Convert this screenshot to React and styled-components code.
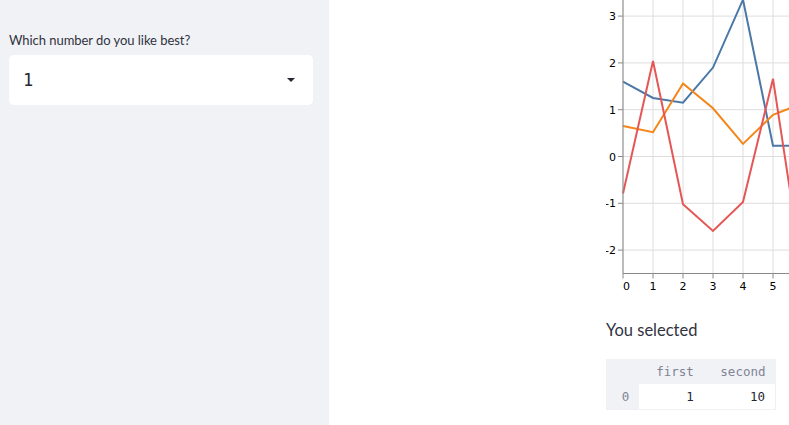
import styled, { createGlobalStyle } from "styled-components";

const GlobalStyle = createGlobalStyle`
  html, body {
    margin: 0;
    padding: 0;
    overflow: hidden;
    background: #ffffff;
  }
`;

const Page = styled.div`
  display: flex;
  width: 789px;
  height: 425px;
  font-family: Lato, "Noto Sans", sans-serif;
  color: #31333f;
`;

const Sidebar = styled.aside`
  width: 329px;
  flex-shrink: 0;
  background: #f0f2f6;
  padding: 32px 16px 0 9px;
  box-sizing: border-box;
`;

const Label = styled.label`
  display: block;
  font-size: 13px;
  letter-spacing: -0.05px;
  line-height: 16px;
  color: #31333f;
  margin-bottom: 7px;
`;

const Select = styled.div`
  display: flex;
  align-items: center;
  justify-content: space-between;
  height: 50px;
  width: 304px;
  box-sizing: border-box;
  padding: 0 18px 0 14px;
  background: #ffffff;
  border-radius: 5px;
`;

const SelectValue = styled.span`
  font-family: "DejaVu Sans Mono", monospace;
  font-size: 17px;
  color: #262730;
`;

const Caret = styled.span`
  width: 0;
  height: 0;
  border-left: 4px solid transparent;
  border-right: 4px solid transparent;
  border-top: 4px solid #262730;
`;

const Main = styled.main`
  flex: 1;
  overflow: hidden;
  padding-left: 277px;
`;

const Content = styled.div`
  width: 183px;
  display: flex;
  flex-direction: column;
`;

const Heading = styled.h3`
  margin: 25px 0 19px;
  font-size: 16.5px;
  font-weight: 400;
  line-height: 20px;
  color: #31333f;
`;

const Table = styled.table`
  border-collapse: collapse;
  font-family: "DejaVu Sans Mono", monospace;
  font-size: 12.5px;
  width: 170px;
`;

const HeadCell = styled.th`
  height: 25px;
  padding: 0 10px 0 0;
  text-align: right;
  font-weight: 400;
  color: #808495;
  background: #f0f2f6;
  width: ${(p) => p.w}px;
`;

const Cell = styled.td`
  height: 25px;
  padding: 0 10px 0 0;
  text-align: right;
  color: ${(p) => (p.index ? "#808495" : "#262730")};
  background: ${(p) => (p.index ? "#f0f2f6" : "#ffffff")};
  border-bottom: 1px solid #eef0f4;
  border-right: ${(p) => (p.last ? "1px solid #eef0f4" : "none")};
`;

const ChartSvg = styled.svg`
  display: block;
  font-family: "DejaVu Sans", sans-serif;
`;

const X0 = 17;
const DX = 30;
const Y0 = 156.5;
const DY = 46.8;
const px = (i) => X0 + DX * i;
const py = (v) => Y0 - DY * v;

const series = [
  { color: "#4c78a8", data: [1.6, 1.25, 1.15, 1.9, 3.35, 0.23, 0.23] },
  { color: "#f58518", data: [0.65, 0.52, 1.56, 1.03, 0.27, 0.89, 1.14] },
  { color: "#e45756", data: [-0.79, 2.04, -1.02, -1.59, -0.97, 1.66, -2.55] },
];

const yTicks = [-2, -1, 0, 1, 2, 3];
const xGrid = [0, 1, 2, 3, 4, 5, 6];
const xLabels = [0, 1, 2, 3, 4, 5];
const bottom = py(-2.5);

const Chart = () => (
  <ChartSvg width="183" height="295" viewBox="0 0 183 295">
    {xGrid.map((i) => (
      <line key={"gx" + i} x1={px(i)} x2={px(i)} y1={-10} y2={bottom} stroke="#ddd" />
    ))}
    {yTicks.map((v) => (
      <line key={"gy" + v} x1={X0} x2={X0 + DX * 7} y1={py(v)} y2={py(v)} stroke="#ddd" />
    ))}
    {series.map((s) => (
      <polyline
        key={s.color}
        fill="none"
        stroke={s.color}
        strokeWidth="2"
        points={s.data.map((v, i) => `${px(i)},${py(v)}`).join(" ")}
      />
    ))}
    <line x1={X0} x2={X0} y1={-10} y2={bottom} stroke="#888" />
    <line x1={X0} x2={X0 + DX * 7} y1={bottom} y2={bottom} stroke="#888" />
    {yTicks.map((v) => (
      <g key={"ty" + v}>
        <line x1={X0 - 5} x2={X0} y1={py(v)} y2={py(v)} stroke="#888" />
        <text x={X0 - 7} y={py(v) + 4} fontSize="11" textAnchor="end" fill="#000">
          {v}
        </text>
      </g>
    ))}
    {xGrid.map((i) => (
      <line key={"tk" + i} x1={px(i)} x2={px(i)} y1={bottom} y2={bottom + 5} stroke="#888" />
    ))}
    {xLabels.map((i) => (
      <text
        key={"tx" + i}
        x={px(i)}
        y={bottom + 16}
        fontSize="11"
        textAnchor={i === 0 ? "start" : "middle"}
        fill="#000"
      >
        {i}
      </text>
    ))}
  </ChartSvg>
);

const App = () => {
  return (
    <Page>
      <GlobalStyle />
      <Sidebar>
        <Label>Which number do you like best?</Label>
        <Select>
          <SelectValue>1</SelectValue>
          <Caret />
        </Select>
      </Sidebar>
      <Main>
        <Content>
          <Chart />
          <Heading>You selected</Heading>
          <Table>
            <thead>
              <tr>
                <HeadCell w={33}></HeadCell>
                <HeadCell w={65}>first</HeadCell>
                <HeadCell w={72}>second</HeadCell>
              </tr>
            </thead>
            <tbody>
              <tr>
                <Cell index>0</Cell>
                <Cell>1</Cell>
                <Cell last>10</Cell>
              </tr>
            </tbody>
          </Table>
        </Content>
      </Main>
    </Page>
  );
};

export default App;
